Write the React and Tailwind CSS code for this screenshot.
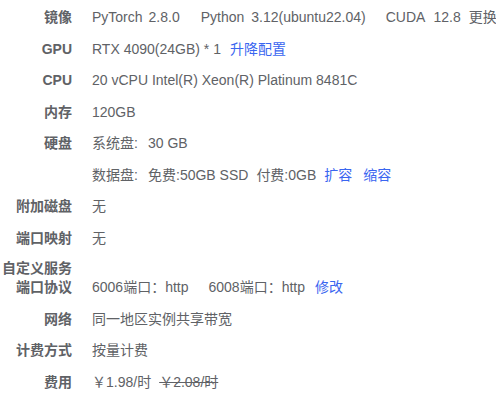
import React from "react";

const Label = ({ children, className = "" }) => (
  <div className={"w-[72px] shrink-0 text-right font-bold " + className}>{children}</div>
);

const Row = ({ label, children, className = "" }) => (
  <div className={"flex gap-5 leading-5 " + className}>
    <Label>{label}</Label>
    <div className="whitespace-nowrap">{children}</div>
  </div>
);

const Link = ({ children, className = "" }) => (
  <span className={"text-[#3a66f0] cursor-pointer " + className}>{children}</span>
);

export default function App() {
  return (
    <div
      className="w-[496px] h-[400px] overflow-hidden bg-white text-[14px] text-[#606266] pt-[7px]"
      style={{ fontFamily: '"Liberation Sans", Arial, "Noto Sans CJK SC", sans-serif' }}
    >
      <div className="flex flex-col gap-[11.5px]">
        <Row label="镜像">
          <span>PyTorch</span>
          <span className="ml-[6px]">2.8.0</span>
          <span className="ml-[21px]">Python</span>
          <span className="ml-[7px]">3.12(ubuntu22.04)</span>
          <span className="ml-[20px]">CUDA</span>
          <span className="ml-[8px]">12.8</span>
          <span className="ml-[8px]">更换</span>
        </Row>
        <Row label="GPU">
          <span>RTX 4090(24GB) * 1</span>
          <Link className="ml-[9px]">升降配置</Link>
        </Row>
        <Row label="CPU">20 vCPU Intel(R) Xeon(R) Platinum 8481C</Row>
        <Row label="内存">120GB</Row>
        <Row label="硬盘">
          <span className="inline-block w-[56px]">系统盘:</span>
          <span>30 GB</span>
        </Row>
        <Row label="">
          <span className="inline-block w-[56px]">数据盘:</span>
          <span>免费:50GB SSD</span>
          <span className="ml-[8px]">付费:0GB</span>
          <Link className="ml-[8px]">扩容</Link>
          <Link className="ml-[11px]">缩容</Link>
        </Row>
        <Row label="附加磁盘">无</Row>
        <Row label="端口映射">无</Row>
        <div className="flex items-end gap-5">
          <Label className="leading-[19px]">
            自定义服务
            <br />
            端口协议
          </Label>
          <div className="whitespace-nowrap leading-5">
            <span>6006端口：http</span>
            <span className="ml-5">6008端口：http</span>
            <Link className="ml-[10px]">修改</Link>
          </div>
        </div>
        <Row label="网络">同一地区实例共享带宽</Row>
        <Row label="计费方式">按量计费</Row>
        <Row label="费用">
          <span>￥1.98/时</span>
          <span className="ml-[8px] line-through">￥2.08/时</span>
        </Row>
      </div>
    </div>
  );
}
